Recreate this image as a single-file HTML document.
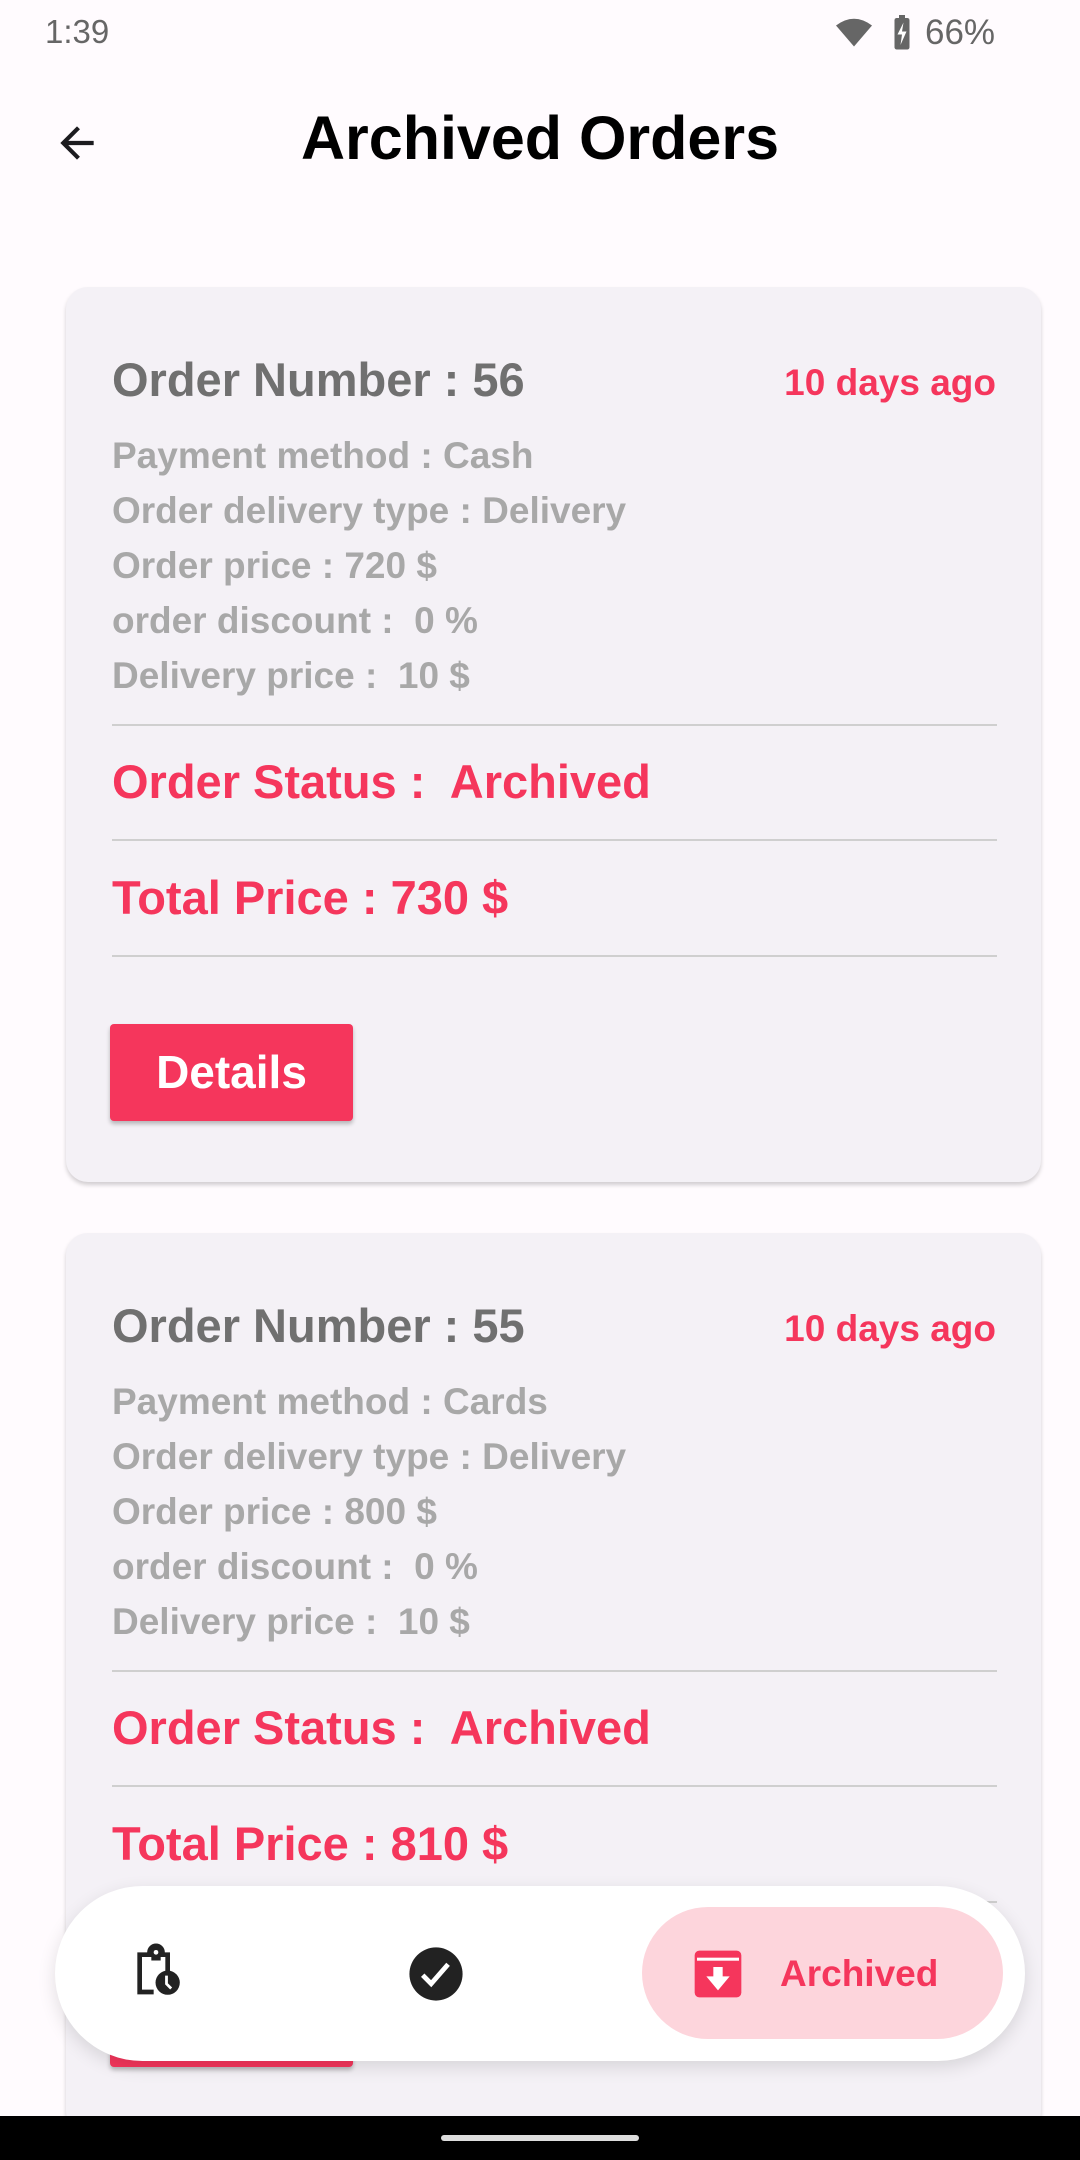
<!DOCTYPE html>
<html><head><meta charset="utf-8"><style>
*{margin:0;padding:0;box-sizing:border-box}
body{width:1080px;height:2160px;background:#fffbfe;font-family:"Liberation Sans",sans-serif;position:relative;overflow:hidden}
.a{position:absolute;white-space:nowrap;line-height:1}
.card{position:absolute;left:66px;width:975px;background:#f4f1f6;border-radius:22px;box-shadow:0 3px 4px rgba(0,0,0,.18)}
.on{left:46px;top:69px;font-size:47px;font-weight:bold;color:#707070}
.ago{right:45px;top:77px;font-size:37px;font-weight:bold;color:#f5365c}
.r{left:46px;font-size:37px;font-weight:bold;color:#a8a8a8}
.hr{position:absolute;left:46px;width:885px;height:2px;background:#cfcfcf}
.red{left:46px;font-size:47px;font-weight:bold;color:#f5365c}
.btn{position:absolute;left:44px;width:243px;height:97px;background:#f5365c;border-radius:4px;color:#fff;font-size:46px;font-weight:bold;text-align:center;line-height:97px;box-shadow:0 3px 4px rgba(0,0,0,.25)}
</style></head><body>
<div class="a" style="left:45px;top:15px;font-size:33px;color:#666">1:39</div>
<svg class="a" style="left:836px;top:18px" width="36" height="30" viewBox="0 0 24 20"><path d="M12 19L0 5Q12-4 24 5Z" fill="#666"/></svg>
<svg class="a" style="left:893px;top:15px" width="18" height="36" viewBox="0 0 12 24"><rect x="1" y="2" width="10" height="21" rx="1.5" fill="#666"/><rect x="4" y="0" width="4" height="3" fill="#666"/><path d="M7 5L3 13h3l-1 7 4-9H6z" fill="#fff"/></svg>
<div class="a" style="left:925px;top:15px;font-size:35px;color:#666">66%</div>
<svg class="a" style="left:52px;top:118px" width="50" height="50" viewBox="0 0 24 24"><path d="M20 11H7.83l5.59-5.59L12 4l-8 8 8 8 1.41-1.41L7.83 13H20z" fill="#1c1b1f"/></svg>
<div class="a" style="left:0;width:1080px;text-align:center;top:108px;font-size:61px;font-weight:bold;color:#000">Archived Orders</div>

<div class="card" style="top:287px;height:895px">
<div class="a on">Order Number : 56</div>
<div class="a ago">10 days ago</div>
<div class="a r" style="top:150px">Payment method : Cash</div>
<div class="a r" style="top:205px">Order delivery type : Delivery</div>
<div class="a r" style="top:260px">Order price : 720 $</div>
<div class="a r" style="top:315px">order discount :&nbsp; 0 %</div>
<div class="a r" style="top:370px">Delivery price :&nbsp; 10 $</div>
<div class="hr" style="top:437px"></div>
<div class="a red" style="top:471px">Order Status :&nbsp; Archived</div>
<div class="hr" style="top:552px"></div>
<div class="a red" style="top:587px">Total Price : 730 $</div>
<div class="hr" style="top:668px"></div>
<div class="btn" style="top:737px">Details</div>
</div>

<div class="card" style="top:1233px;height:900px">
<div class="a on">Order Number : 55</div>
<div class="a ago">10 days ago</div>
<div class="a r" style="top:150px">Payment method : Cards</div>
<div class="a r" style="top:205px">Order delivery type : Delivery</div>
<div class="a r" style="top:260px">Order price : 800 $</div>
<div class="a r" style="top:315px">order discount :&nbsp; 0 %</div>
<div class="a r" style="top:370px">Delivery price :&nbsp; 10 $</div>
<div class="hr" style="top:437px"></div>
<div class="a red" style="top:471px">Order Status :&nbsp; Archived</div>
<div class="hr" style="top:552px"></div>
<div class="a red" style="top:587px">Total Price : 810 $</div>
<div class="hr" style="top:668px"></div>
<div class="btn" style="top:737px">Details</div>
</div>

<div style="position:absolute;left:55px;top:1886px;width:970px;height:175px;background:#fff;border-radius:88px;box-shadow:0 6px 18px rgba(0,0,0,.12)"></div>
<div style="position:absolute;left:642px;top:1907px;width:361px;height:132px;background:#fdd5dc;border-radius:66px"></div>
<svg class="a" style="left:128px;top:1943px" width="56" height="56" viewBox="0 0 24 24"><path d="M4 4h4.2a3.8 3.8 0 0 1 7.6 0H18v8.5h-2V6h-2v1.5H10V6H6v14h5v2H4z" fill="#222"/><circle cx="12" cy="4" r="1" fill="#fff"/><circle cx="17" cy="17" r="5.2" fill="#222"/><path d="M16.5 14v3.5l2 2" stroke="#fff" stroke-width="1.2" fill="none"/></svg>
<svg class="a" style="left:407px;top:1945px" width="58" height="58" viewBox="0 0 24 24"><circle cx="12" cy="12" r="11" fill="#222"/><path d="M6.5 12.5l3.5 3.5 7-8" stroke="#fff" stroke-width="2" fill="none"/></svg>
<svg class="a" style="left:690px;top:1946px" width="56" height="56" viewBox="0 0 24 24"><rect x="2" y="2" width="20" height="20" rx="2" fill="#f5365c"/><rect x="3" y="5" width="18" height="1.3" fill="#fff"/><path d="M10 9h4v4h3l-5 6-5-6h3z" fill="#fff"/></svg>
<div class="a" style="left:780px;top:1955px;font-size:37px;font-weight:bold;color:#f5365c">Archived</div>

<div style="position:absolute;left:0;top:2116px;width:1080px;height:44px;background:#000"></div>
<div style="position:absolute;left:441px;top:2135px;width:198px;height:6px;border-radius:3px;background:#ddd"></div>
</body></html>
